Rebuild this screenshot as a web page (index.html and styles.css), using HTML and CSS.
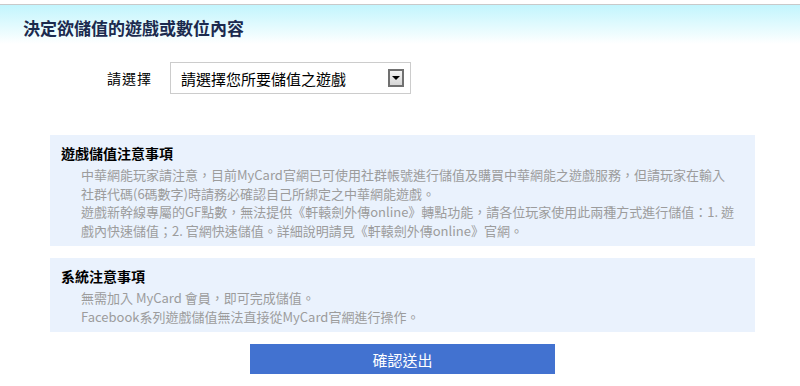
FILE: index.html
```html
<!DOCTYPE html>
<html lang="zh-Hant">

<head>
    <meta charset="UTF-8">
    <meta name="viewport" content="width=device-width, initial-scale=1.0">
    <title>儲值</title>
    <link rel="stylesheet" href="styles.css">
</head>

<body>
    <div class="page-header">
        <h2>決定欲儲值的遊戲或數位內容</h2>
    </div>

    <div class="pick-row">
        <label class="pick-label">請選擇</label>
        <div class="fake-select">
            <span class="fake-select-text">請選擇您所要儲值之遊戲</span>
            <span class="fake-select-arrow"></span>
        </div>
    </div>

    <div class="notice">
        <h3>遊戲儲值注意事項</h3>
        <div class="notice-body">
            <p>中華網能玩家請注意，目前MyCard官網已可使用社群帳號進行儲值及購買中華網能之遊戲服務，但請玩家在輸入<br>社群代碼(6碼數字)時請務必確認自己所綁定之中華網能遊戲。</p>
            <p>遊戲新幹線專屬的GF點數，無法提供《軒轅劍外傳online》轉點功能，請各位玩家使用此兩種方式進行儲值：1. 遊<br>戲內快速儲值；2. 官網快速儲值。詳細說明請見《軒轅劍外傳online》官網。</p>
        </div>
    </div>

    <div class="notice">
        <h3>系統注意事項</h3>
        <div class="notice-body">
            <p>無需加入 MyCard 會員，即可完成儲值。</p>
            <p>Facebook系列遊戲儲值無法直接從MyCard官網進行操作。</p>
        </div>
    </div>

    <div class="submit-row">
        <button class="submit-button">確認送出</button>
    </div>
</body>

</html>
```

FILE: styles.css
```css
body {
    font-family: "Noto Sans CJK TC", "Liberation Sans", sans-serif;
    margin: 0;
    padding: 0;
    background-color: #fff;
    color: #000;
}

.page-header {
    margin-top: 4px;
    border-top: 1px solid #c9c9c9;
    height: 40px;
    padding: 12px 0 0 23px;
    box-sizing: border-box;
    background: linear-gradient(#c2f5fd, #e6fbfe 60%, #fff);
}

.page-header h2 {
    margin: 0;
    font-size: 17px;
    line-height: 22px;
    font-weight: bold;
    color: #1b2a4e;
}

.pick-row {
    display: flex;
    align-items: center;
    margin: 18px 0 0 107px;
}

.pick-label {
    font-size: 14px;
    letter-spacing: 1px;
    width: 63px;
}

.fake-select {
    display: flex;
    align-items: center;
    justify-content: space-between;
    width: 241px;
    height: 32px;
    box-sizing: border-box;
    border: 1px solid #cccccc;
    padding: 0 6px 0 10px;
}

.fake-select-text {
    font-size: 15px;
}

.fake-select-arrow {
    position: relative;
    width: 16px;
    height: 18px;
    box-sizing: border-box;
    border: 2px solid #707070;
    background: linear-gradient(#f4f4f4, #d6d6d6);
}

.fake-select-arrow::after {
    content: "";
    position: absolute;
    left: 2px;
    top: 5px;
    border-left: 4px solid transparent;
    border-right: 4px solid transparent;
    border-top: 4px solid #000;
}

.notice {
    width: 705px;
    margin: 0 0 12px 50px;
    padding: 8px 2px 6px 11px;
    box-sizing: border-box;
    background-color: #eaf2fd;
}

.pick-row + .notice {
    margin-top: 41px;
}

.notice h3 {
    margin: 0 0 3px;
    font-size: 14px;
    line-height: 20px;
    font-weight: bold;
}

.notice-body {
    padding-left: 20px;
    font-size: 13px;
    line-height: 18.5px;
    color: #9c9c9c;
}

.notice-body p {
    margin: 0;
}

.submit-row {
    display: flex;
    justify-content: center;
    padding-left: 5px;
}

.submit-button {
    width: 305px;
    height: 30px;
    border: none;
    background-color: #4272d0;
    color: #fff;
    font-family: inherit;
    font-size: 15px;
    cursor: pointer;
}
```
